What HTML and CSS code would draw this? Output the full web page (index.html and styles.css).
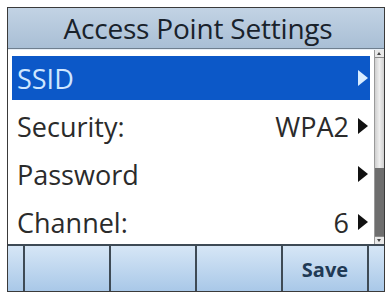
FILE: index.html
```html
<!DOCTYPE html>
<html lang="en">
<head>
    <meta charset="UTF-8">
    <title>Access Point Settings</title>
    <link rel="stylesheet" href="styles.css">
</head>
<body>

<div class="screen">
    <!-- Title bar -->
    <div class="title-bar">Access Point Settings</div>

    <!-- Menu list with scrollbar -->
    <div class="content">
        <div class="menu-list">
            <div class="menu-row selected">
                <span class="label">SSID</span>
                <span class="arrow"></span>
            </div>
            <div class="menu-row">
                <span class="label">Security:</span>
                <span class="value">WPA2</span>
                <span class="arrow"></span>
            </div>
            <div class="menu-row">
                <span class="label">Password</span>
                <span class="arrow"></span>
            </div>
            <div class="menu-row">
                <span class="label">Channel:</span>
                <span class="value">6</span>
                <span class="arrow"></span>
            </div>
        </div>
        <div class="scrollbar">
            <div class="scroll-btn up"></div>
            <div class="scroll-track">
                <div class="scroll-thumb"></div>
            </div>
            <div class="scroll-btn down"></div>
        </div>
    </div>

    <!-- Soft keys -->
    <div class="softkeys">
        <div class="softkey edge"></div>
        <div class="softkey"></div>
        <div class="softkey"></div>
        <div class="softkey"></div>
        <div class="softkey">Save</div>
        <div class="softkey edge"></div>
    </div>
</div>

</body>
</html>
```

FILE: styles.css
```css
/* Page */
body {
    margin: 0;
    background-color: #ffffff;
    font-family: "Open Sans", "Noto Sans", sans-serif;
}

/* Phone screen frame */
.screen {
    margin: 7px 0 0 7px;
    width: 378px;
    height: 285px;
    border: 1px solid #3a3a3a;
    box-sizing: border-box;
    display: flex;
    flex-direction: column;
    background-color: #ffffff;
}

/* Title bar */
.title-bar {
    height: 40px;
    flex-shrink: 0;
    background: linear-gradient(#c2d3e4, #a9bfd5);
    border-bottom: 1px solid #6f7f8f;
    color: #19222b;
    font-size: 28px;
    font-weight: 500;
    line-height: 40px;
    text-align: center;
    padding-left: 4px;
    letter-spacing: -0.2px;
}

/* List area */
.content {
    flex: 1;
    display: flex;
    border-top: 1px solid #e6eef6;
}

.menu-list {
    flex: 1;
    padding: 6px 4px 0 4px;
    display: flex;
    flex-direction: column;
    gap: 4px;
}

.menu-row {
    height: 44px;
    display: flex;
    align-items: center;
    padding: 0 2px 0 5px;
    color: #2b2b2b;
    font-size: 27px;
    font-weight: 500;
}

.menu-row.selected {
    background-color: #0c58c8;
    color: #cfe6ff;
}

.label {
    flex: 1;
}

.value {
    margin-right: 9px;
}

.arrow {
    width: 0;
    height: 0;
    border-top: 8px solid transparent;
    border-bottom: 8px solid transparent;
    border-left: 10px solid #111111;
}

.menu-row.selected .arrow {
    border-left-color: #d8ecff;
}

/* Scrollbar */
.scrollbar {
    width: 9px;
    display: flex;
    flex-direction: column;
    border-left: 1px solid #9a9a9a;
    background-color: #d9d9d9;
}

.scroll-btn {
    height: 7px;
    background-color: #e8e8e8;
    border-bottom: 1px solid #8a8a8a;
    position: relative;
}

.scroll-btn.down {
    border-bottom: none;
    border-top: 1px solid #8a8a8a;
}

.scroll-btn.up::after,
.scroll-btn.down::after {
    content: "";
    position: absolute;
    left: 2px;
    top: 2px;
    border-left: 2px solid transparent;
    border-right: 2px solid transparent;
}

.scroll-btn.up::after {
    border-bottom: 3px solid #444;
}

.scroll-btn.down::after {
    border-top: 3px solid #444;
}

.scroll-track {
    flex: 1;
    display: flex;
    flex-direction: column;
    justify-content: flex-end;
    background: linear-gradient(90deg, #cfcfcf, #eeeeee, #cfcfcf);
}

.scroll-thumb {
    height: 68px;
    background-color: #6e6e6e;
}

/* Soft key bar */
.softkeys {
    height: 45px;
    flex-shrink: 0;
    display: flex;
    border-top: 2px solid #3e4a55;
    background: linear-gradient(#d6e6f6, #a9c8e8);
}

.softkey {
    width: 86px;
    border-right: 2px solid #3e4a55;
    display: flex;
    align-items: center;
    justify-content: center;
    color: #1f3a55;
    font-size: 20px;
    font-weight: bold;
    padding-top: 2px;
    box-sizing: border-box;
}

.softkey.edge {
    width: 17px;
}

.softkey.edge:last-child {
    flex: 1;
    border-right: none;
}
```
